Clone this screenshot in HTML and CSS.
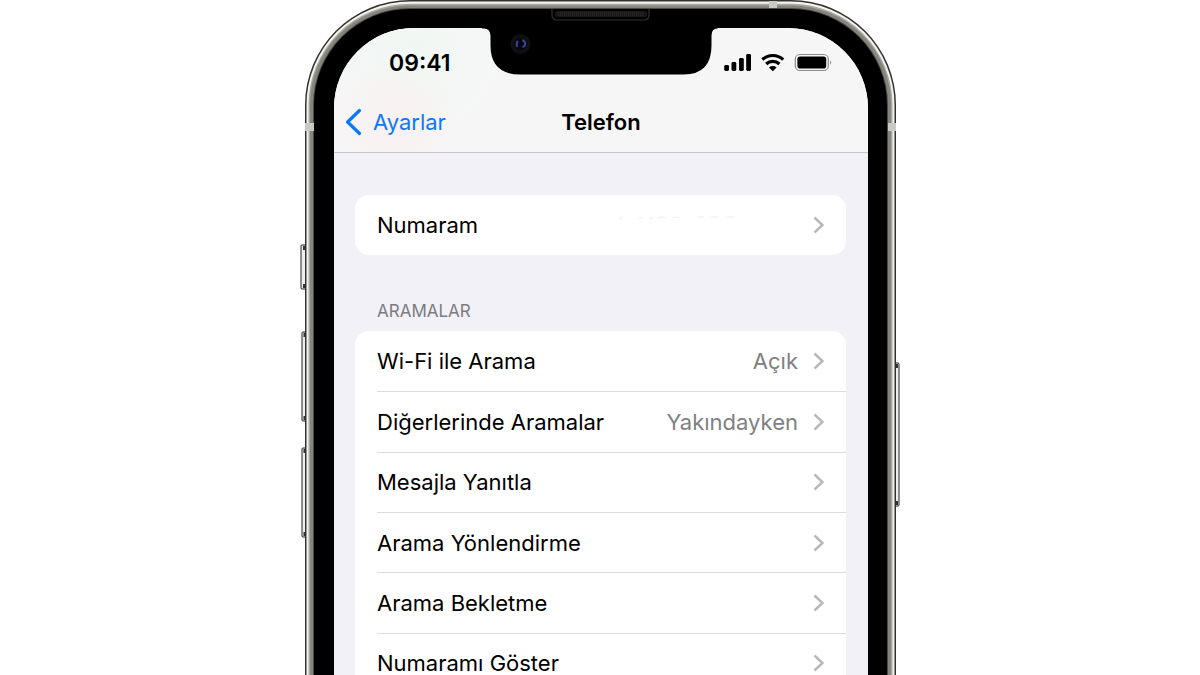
FILE: index.html
```html
<!DOCTYPE html>
<html lang="tr">
<head>
<meta charset="utf-8">
<meta name="viewport" content="width=device-width, initial-scale=1">
<title>Telefon</title>
<link rel="stylesheet" href="styles.css">
</head>
<body>
<svg class="symbols" aria-hidden="true">
  <symbol id="chevron" viewBox="0 0 12 20"><path d="M1.500 2.500 9.400 10 1.500 17.500" fill="none" stroke="currentColor" stroke-width="2.500"/></symbol>
</svg>
<div class="phone">
  <svg class="hardware" viewBox="0 0 602 675" aria-hidden="true">
    <g class="keys">
      <rect x="1" y="245" width="6" height="44" rx="1"/>
      <rect x="2" y="332" width="5" height="89" rx="1"/>
      <rect x="2" y="448" width="5" height="89" rx="1"/>
      <rect x="594" y="363" width="5" height="143" rx="1"/>
      <path class="key-ends" d="M4 246v4M4 284v4M4.500 333v4M4.500 416v4M4.500 449v4M4.500 532v4M597 364v4M597 501v4"/>
    </g>
    <rect x="5" y="0" width="591" height="900" rx="105" fill="#33322f"/>
    <rect x="6.500" y="1.500" width="588" height="900" rx="103.500" fill="#f4f4ef"/>
    <rect x="8.500" y="3.800" width="584" height="900" rx="101" fill="#a9a9a2"/>
    <rect x="10" y="5.500" width="581" height="900" rx="99" fill="#85857e"/>
    <rect x="13" y="8" width="575" height="900" rx="97" fill="#4b4b47"/>
    <rect x="14" y="9" width="573" height="900" rx="96" fill="#000"/>
    <path fill="#c9c9c5" d="M5 123h9v8H5zM588 123h8v8h-8zM469 1h8v7h-8z"/>
  </svg>
  <div class="screen">
    <header class="top">
      <div class="status">
        <span class="time">09:41</span>
        <svg class="indicators" viewBox="0 0 110 20" role="img" aria-label="Sinyal, Wi-Fi, pil">
          <rect x="0.200" y="12" width="4.800" height="6" rx="1.400"/>
          <rect x="7.500" y="9" width="4.800" height="9" rx="1.400"/>
          <rect x="15" y="5" width="4.800" height="13" rx="1.400"/>
          <rect x="22.200" y="1" width="4.800" height="17" rx="1.400"/>
          <g fill="none" stroke="#000" stroke-width="3.200">
            <path d="M38.400 6.600a15.200 15.200 0 0 1 20.800 0"/>
            <path d="M42.200 11a9.600 9.600 0 0 1 13.200 0"/>
          </g>
          <path d="M48.800 18.300 45 14.600a5.600 5.600 0 0 1 7.600 0z"/>
          <rect x="71.300" y="1.500" width="33" height="16" rx="4.600" fill="none" stroke="#8b8b8b" stroke-width="1.200"/>
          <rect x="73.400" y="3.500" width="28.800" height="12" rx="2.800"/>
          <path d="M106.300 7.300q1.900 2.200 0 4.400z" fill="#777"/>
        </svg>
      </div>
      <nav class="nav">
        <a class="back" href="#"><svg viewBox="0 0 18 28" aria-hidden="true"><path d="M14.500 2.500 2.600 14l11.900 11.500" fill="none" stroke="currentColor" stroke-width="3.200" stroke-linecap="round" stroke-linejoin="round"/></svg>Ayarlar</a>
        <h1>Telefon</h1>
      </nav>
    </header>
    <main>
      <ul class="card single">
        <li><a href="#"><span class="label">Numaram</span>
          <svg class="traces" viewBox="0 0 120 6" aria-hidden="true"><path d="M2 4l4-2M22 4l3-2M33 4l3-2M41 3q5-2 8 0M55 3q5-2 8 0M80 2h7M94 2h8M110 2h8" fill="none" stroke="#f0f0f0" stroke-width="1.200"/></svg>
          <svg class="chev" aria-hidden="true"><use href="#chevron"/></svg></a></li>
      </ul>
      <h2>ARAMALAR</h2>
      <ul class="card calls">
        <li><a href="#"><span class="label">Wi-Fi ile Arama</span><span class="value">Açık</span><svg class="chev" aria-hidden="true"><use href="#chevron"/></svg></a></li>
        <li><a href="#"><span class="label">Diğerlerinde Aramalar</span><span class="value">Yakındayken</span><svg class="chev" aria-hidden="true"><use href="#chevron"/></svg></a></li>
        <li><a href="#"><span class="label">Mesajla Yanıtla</span><svg class="chev" aria-hidden="true"><use href="#chevron"/></svg></a></li>
        <li><a href="#"><span class="label">Arama Yönlendirme</span><svg class="chev" aria-hidden="true"><use href="#chevron"/></svg></a></li>
        <li><a href="#"><span class="label">Arama Bekletme</span><svg class="chev" aria-hidden="true"><use href="#chevron"/></svg></a></li>
        <li><a href="#"><span class="label">Numaramı Göster</span><svg class="chev" aria-hidden="true"><use href="#chevron"/></svg></a></li>
      </ul>
    </main>
  </div>
  <svg class="notch" viewBox="0 0 236 68" aria-hidden="true">
    <path d="M0 20.500h2q6 0 6.500 7v10q0 29 30 29h163q28 0 28-29v-10q0-7 6-7V3H0z"/>
    <path d="M70 1v6q0 5 5 5h87q5 0 5-5V1" fill="none" stroke="#30302e" stroke-width="1.200"/>
    <rect x="73" y="3" width="92" height="6" rx="3" fill="#191918"/>
    <path d="M76 5h86M76 7h86" stroke="#30302e" stroke-dasharray="1 1"/>
    <circle cx="38.500" cy="36" r="10" fill="#101012"/>
    <circle cx="38.500" cy="36" r="6" fill="#06060c"/>
    <path d="M36 33q-2 2-1 6M40.500 32q4 2 2 6l-2 1" fill="none" stroke="#3c459c" stroke-width="2"/>
  </svg>
</div>
</body>
</html>
```
FILE: styles.css
```css
* { box-sizing: border-box; }
body {
  margin: 0;
  background: #fff;
  color: #000;
  font-family: Inter, "Noto Sans", sans-serif;
  font-size: 22px;
  line-height: 28px;
}
a { color: inherit; text-decoration: none; }
ul { margin: 0; padding: 0; list-style: none; }
h1, h2 { margin: 0; }
.symbols { display: none; }

.phone {
  position: relative;
  width: 100%;
  max-width: 600px;
  height: 100vh;
  margin: 0 auto;
  padding: 28px 32px 0 34px;
  overflow: hidden;
}
.hardware {
  position: absolute;
  top: 0;
  left: 0;
  width: 602px;
  height: 675px;
}
.keys rect { fill: #eee; stroke: #222; }
.key-ends { stroke: #333; stroke-width: 2; }
.notch {
  position: absolute;
  top: 8px;
  left: 182px;
  width: 236px;
  height: 68px;
}

.screen {
  position: relative;
  border-radius: 80px 80px 0 0;
  background: #f2f1f7;
  overflow: hidden;
}
.top {
  height: 125px;
  border-bottom: 1px solid #c7c7ca;
  background:
    radial-gradient(circle at 60px 95px, #faf0f0, transparent 60px),
    radial-gradient(circle at 80px 20px, #f0f7f3, transparent 90px),
    #f6f6f6;
}
.status {
  display: flex;
  align-items: center;
  justify-content: space-between;
  height: 70px;
  padding: 0 34px 0 55px;
}
.time { font-size: 23px; font-weight: 600; }
.indicators { width: 110px; height: 20px; }
.nav {
  display: grid;
  grid-template-columns: 1fr auto 1fr;
  align-items: center;
  padding: 10px 11px;
}
.back { display: flex; align-items: center; gap: 10px; color: #0b79f7; }
.back svg { width: 18px; height: 28px; }
h1 { font-size: 22px; font-weight: 600; line-height: 28px; }

main { padding: 42px 22px 0 21px; }
.card { border-radius: 14px; background: #fff; overflow: hidden; }
.card a {
  display: flex;
  align-items: center;
  height: 100%;
  min-height: 60px;
  margin-left: 22px;
  padding-right: 21px;
}
.label { flex: 1; }
.value { color: #808084; }
.chev { width: 12px; height: 20px; margin-left: 15px; color: #b9b9bc; }
.traces { width: 120px; height: 6px; margin: 0 61px 14px 0; }
.calls { display: grid; grid-auto-rows: 1fr; min-height: 362px; }
.calls li + li a { border-top: 1px solid #dcdcde; }
h2 {
  padding: 44px 22px 8px;
  font-size: 17px;
  font-weight: 400;
  line-height: 24px;
  color: #7c7c81;
}
```
